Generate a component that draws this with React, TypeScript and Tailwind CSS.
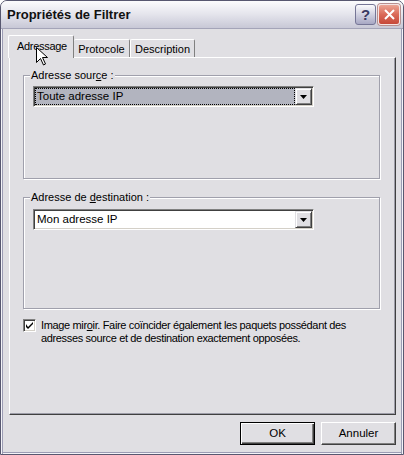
import React from 'react';

function Combo({ value, selected }: { value: string; selected?: boolean }) {
  return (
    <div className="w-[281px] h-[21px] flex p-px bg-white border border-t-[#808080] border-l-[#808080] border-r-white border-b-white shadow-[inset_1px_1px_0_#404040,inset_-1px_-1px_0_#d4d0c8]">
      <div
        className={
          selected
            ? 'flex-1 flex items-center pl-[2px] bg-[#b2b4bf] outline-1 outline-dotted outline-black -outline-offset-1 text-[11.5px]'
            : 'flex-1 flex items-center pl-[2px] text-[11.5px]'
        }
      >
        {value}
      </div>
      <div className="w-[17px] flex items-center justify-center bg-[#e0dfe3] border border-t-[#e0dfe3] border-l-[#e0dfe3] border-r-[#404040] border-b-[#404040] shadow-[inset_1px_1px_0_#fff,inset_-1px_-1px_0_#808080]">
        <svg width="7" height="4" viewBox="0 0 7 4">
          <path d="M0 0h7L3.5 4z" fill="#000" />
        </svg>
      </div>
    </div>
  );
}

export default function App() {
  return (
    <div className="relative w-[404px] h-[455px] font-['Liberation_Sans',Arial,sans-serif] text-[11px] text-black">
      <div className="w-full h-full flex flex-col bg-[#e0dfe3] border border-[#585870] rounded-t-[7px] overflow-hidden">
        {/* title bar */}
        <div className="h-[28px] shrink-0 flex items-center pl-[6px] pr-[3px] bg-gradient-to-b from-[#fcfcfd] via-[#e4e4ec] to-[#c8c8d6] border-b border-[#a4a4b8]">
          <span className="flex-1 text-[13px] font-bold pt-px text-[#111]">Propriétés de Filtrer</span>
          <div className="w-[21px] h-[21px] flex items-center justify-center rounded-[3px] border border-[#767696] bg-gradient-to-b from-[#fbfbfd] to-[#a8a8c4] text-[#3a3a62] text-[15px] font-bold leading-none">
            ?
          </div>
          <div className="ml-[2px] w-[22px] h-[21px] flex items-center justify-center rounded-[3px] border border-[#f4e4e4] bg-gradient-to-b from-[#eba595] via-[#da6a58] to-[#c6483a] shadow-[0_0_0_1px_#b89090]">
            <svg width="11" height="11" viewBox="0 0 11 11">
              <path d="M1 1l9 9M10 1l-9 9" stroke="#fff" strokeWidth="2" />
            </svg>
          </div>
        </div>

        {/* body */}
        <div className="flex-1 flex flex-col pl-[8px] pr-[7px] pt-[6px] pb-[9px] shadow-[inset_1px_0_0_#f4f4f8,inset_2px_0_0_#9c9cb4,inset_-1px_0_0_#f4f4f8,inset_-2px_0_0_#9c9cb4,inset_0_-1px_0_#f4f4f8,inset_0_-2px_0_#9c9cb4]">
          {/* tabs */}
          <div className="relative z-10 -ml-px flex items-end h-[22px]">
            <div className="w-[66px] h-[23px] -mb-px pt-[4px] pl-[8px] bg-[#e0dfe3] border-t border-l border-white border-r border-r-[#808080] rounded-t-[2px] leading-[13px] tracking-[-0.3px]">
              Adressage
            </div>
            <div className="w-[56px] h-[18px] pt-[3px] text-center bg-[#e0dfe3] border-t border-white border-r border-r-[#808080] rounded-t-[2px] leading-[13px]">
              Protocole
            </div>
            <div className="w-[65px] h-[18px] pt-[3px] text-center bg-[#e0dfe3] border-t border-l border-white border-r border-r-[#808080] rounded-t-[2px] leading-[13px]">
              Description
            </div>
          </div>

          {/* panel */}
          <div className="h-[358px] flex flex-col border border-t-white border-l-white border-r-[#404040] border-b-[#404040] shadow-[inset_-1px_-1px_0_#9d9da8]">
            <fieldset className="ml-[13px] mt-[11px] w-[357px] h-[110px] border border-[#a0a0ac] shadow-[1px_1px_0_#fff,inset_1px_1px_0_#fff]">
              <legend className="ml-[6px] px-px leading-[13px] bg-[#e0dfe3]">
                Adresse sour<u>c</u>e :
              </legend>
              <div className="pl-[9px] pt-[4px]">
                <Combo value="Toute adresse IP" selected />
              </div>
            </fieldset>

            <fieldset className="ml-[13px] mt-[12px] w-[357px] h-[118px] border border-[#a0a0ac] shadow-[1px_1px_0_#fff,inset_1px_1px_0_#fff]">
              <legend className="ml-[6px] px-px leading-[13px] bg-[#e0dfe3]">
                Adresse de <u>d</u>estination :
              </legend>
              <div className="pl-[9px] pt-[5px]">
                <Combo value="Mon adresse IP" />
              </div>
            </fieldset>

            <div className="ml-[13px] mt-[10px] flex gap-[5px]">
              <div className="w-[13px] h-[13px] shrink-0 flex items-center justify-center bg-white border border-t-[#808080] border-l-[#808080] border-r-white border-b-white shadow-[inset_1px_1px_0_#404040,inset_-1px_-1px_0_#d4d0c8]">
                <svg width="7" height="7" viewBox="0 0 7 7">
                  <path d="M0 2v3l2 2 5-5V0L2 5z" fill="#000" />
                </svg>
              </div>
              <p className="w-[320px] leading-[13px] tracking-[-0.35px]">
                Image mir<u>o</u>ir. Faire coïncider également les paquets possédant des adresses source et de destination exactement opposées.
              </p>
            </div>
          </div>

          {/* buttons */}
          <div className="mt-[7px] flex justify-end gap-[6px]">
            <button className="w-[75px] h-[23px] bg-[#e0dfe3] border border-black shadow-[inset_1px_1px_0_#fff,inset_-1px_-1px_0_#404040,inset_-2px_-2px_0_#808080] text-[11.5px]">
              OK
            </button>
            <button className="w-[75px] h-[23px] bg-[#e0dfe3] border border-t-white border-l-white border-r-[#404040] border-b-[#404040] shadow-[inset_-1px_-1px_0_#808080] text-[11.5px]">
              Annuler
            </button>
          </div>
        </div>
      </div>

      {/* mouse pointer */}
      <svg className="absolute z-20 left-[35px] top-[46px]" width="13" height="21" viewBox="0 0 13 21">
        <path d="M1.5 1.5v15l4-4 3 6.5 2-1-3-6.5h5z" fill="#fff" stroke="#000" strokeWidth="1" strokeLinejoin="miter" />
      </svg>
    </div>
  );
}
